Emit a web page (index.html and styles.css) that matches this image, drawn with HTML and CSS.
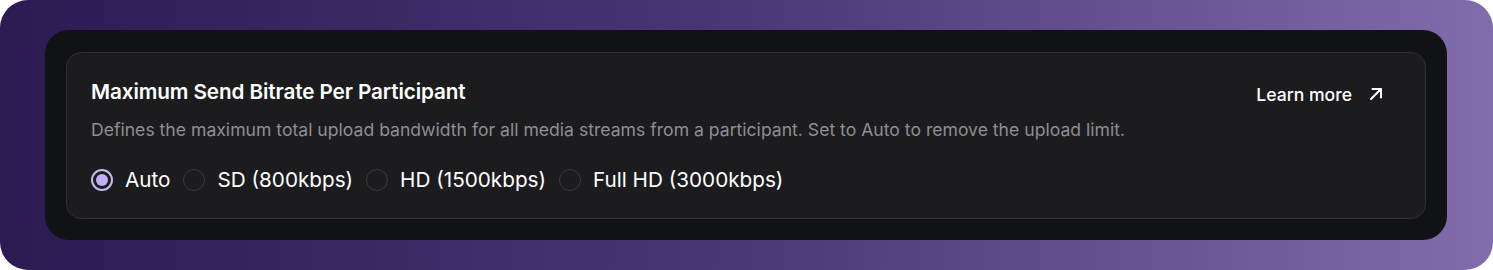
FILE: index.html
```html
<!DOCTYPE html>
<html>
<head>
<meta charset="utf-8">
<link rel="stylesheet" href="styles.css">
</head>
<body>
<div class="bg">
  <div class="frame">
    <div class="card">
      <div class="head">
        <div class="title">Maximum Send Bitrate Per Participant</div>
        <a class="learn">Learn more
          <svg width="16" height="16" viewBox="0 0 16 16" fill="none" stroke="#fff" stroke-width="2" stroke-linecap="round" stroke-linejoin="round"><path d="M3 13 L12.5 3.5"/><path d="M4.5 3 H13 V11.5"/></svg>
        </a>
      </div>
      <div class="desc">Defines the maximum total upload bandwidth for all media streams from a participant. Set to Auto to remove the upload limit.</div>
      <div class="radios">
        <label class="opt"><span class="radio on"></span>Auto</label>
        <label class="opt"><span class="radio"></span>SD (800kbps)</label>
        <label class="opt"><span class="radio"></span>HD (1500kbps)</label>
        <label class="opt"><span class="radio"></span>Full HD (3000kbps)</label>
      </div>
    </div>
  </div>
</div>
</body>
</html>
```
FILE: styles.css
```css
html, body { margin: 0; padding: 0; background: #fff; }
body { font-family: Inter, "Noto Sans", sans-serif; }
.bg {
  width: 1493px; height: 270px; box-sizing: border-box;
  border-radius: 28px;
  background: linear-gradient(90deg, #2c1a53 0%, #4a3775 50%, #816cac 100%);
  padding: 30px 46px 30px 45px;
}
.frame {
  height: 210px; box-sizing: border-box;
  background: #111214; border-radius: 24px;
  padding: 22px 21px 21px 21px;
}
.card {
  height: 167px; box-sizing: border-box;
  background: #1c1c1e; border: 1px solid #2f2f34; border-radius: 15px;
  padding: 26px 24px 0 24px;
}
.head { display: flex; justify-content: space-between; align-items: center; height: 26px; }
.title { color: #fff; font-weight: 600; font-size: 20.7px; line-height: 26px; letter-spacing: -0.1px; }
.learn { color: #fff; font-weight: 500; font-size: 17.6px; display: flex; align-items: center; gap: 16px; margin-right: 17px; margin-top: 4px; }
.learn svg { display: block; }
.desc { color: #8e8e93; font-size: 17.6px; line-height: 22px; margin-top: 14px; }
.radios { display: flex; align-items: center; margin-top: 26px; gap: 13px; }
.opt { display: flex; align-items: center; gap: 12px; color: #fff; font-size: 20.7px; line-height: 26px; }
.radio {
  width: 22px; height: 22px; box-sizing: border-box; border-radius: 50%;
  border: 1.5px solid #3a3a40; background: #1c1c1e; position: relative;
}
.radio.on { border: 2px solid #c9b7f2; }
.radio.on::after {
  content: ""; position: absolute; left: 3px; top: 3px; width: 12px; height: 12px;
  border-radius: 50%; background: #c4aff4;
}
```
